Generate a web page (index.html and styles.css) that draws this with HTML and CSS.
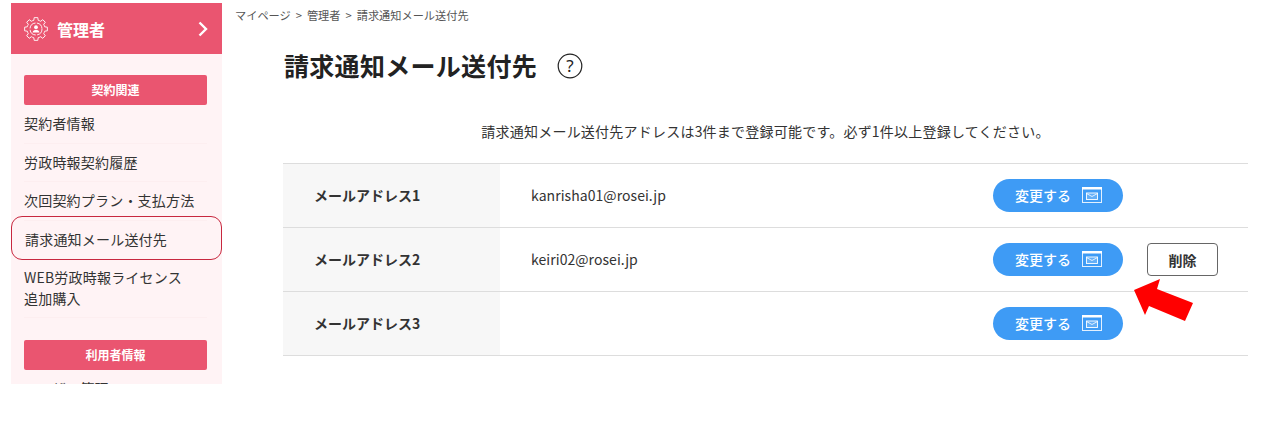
FILE: index.html
```html
<!DOCTYPE html>
<html lang="ja">
<head>
<meta charset="utf-8">
<title>請求通知メール送付先</title>
<link rel="stylesheet" href="styles.css">
</head>
<body>
<div class="page">
  <aside class="sidebar">
    <div class="side-head">
      <svg class="gear" viewBox="0 0 24 24" width="24" height="24" fill="none" stroke="#fff" stroke-width=".9">
        <defs><path id="tooth" d="M20.730 9.820L23.360 10.200V13.800L20.730 14.180A9 9 0 0 1 19.710 16.640"/></defs>
        <use href="#tooth"/>
        <use href="#tooth" transform="rotate(45 12 12)"/>
        <use href="#tooth" transform="rotate(90 12 12)"/>
        <use href="#tooth" transform="rotate(135 12 12)"/>
        <use href="#tooth" transform="rotate(180 12 12)"/>
        <use href="#tooth" transform="rotate(225 12 12)"/>
        <use href="#tooth" transform="rotate(270 12 12)"/>
        <use href="#tooth" transform="rotate(315 12 12)"/>
        <circle cx="12" cy="12" r="6" stroke-dasharray="8 1.500"/>
        <circle cx="12" cy="10.200" r="1.900" fill="#fff" stroke="none"/>
        <path d="M8.600 15.600c.3-2 1.700-2.800 3.400-2.800s3.100.8 3.400 2.800z" fill="#fff" stroke="none"/>
      </svg>
      <span class="side-title">管理者</span>
      <svg class="chev" viewBox="0 0 10 16" width="10" height="16" fill="none" stroke="#fff" stroke-width="2.400"><path d="M1.500 1.500 8 8l-6.500 6.500"/></svg>
    </div>
    <div class="side-body">
      <div class="group-label">契約関連</div>
      <ul class="menu">
        <li class="menu-item">契約者情報</li>
        <li class="menu-item">労政時報契約履歴</li>
        <li class="menu-item">次回契約プラン・支払方法</li>
        <li class="menu-item active">請求通知メール送付先</li>
        <li class="menu-item multi">WEB労政時報ライセンス<br>追加購入</li>
      </ul>
      <div class="group-label second">利用者情報</div>
      <ul class="menu">
        <li class="menu-item">ユーザー管理</li>
      </ul>
    </div>
  </aside>
  <main class="content">
    <nav class="crumbs">マイページ &gt; 管理者 &gt; 請求通知メール送付先</nav>
    <div class="title-row">
      <h1 class="title">請求通知メール送付先</h1>
      <svg class="help" viewBox="0 0 26 26" width="26" height="26"><circle cx="13" cy="13" r="11.800" fill="none" stroke="#222" stroke-width="1.200"/><text x="13" y="19" text-anchor="middle" class="help-mark">?</text></svg>
    </div>
    <p class="lead">請求通知メール送付先アドレスは3件まで登録可能です。必ず1件以上登録してください。</p>
    <div class="table">
      <div class="row">
        <div class="label">メールアドレス1</div>
        <div class="value">kanrisha01@rosei.jp</div>
        <div class="actions">
          <button class="change">変更する<svg class="mail" viewBox="0 0 20 16" width="20" height="16"><use href="#mail-icon"/></svg></button>
        </div>
      </div>
      <div class="row">
        <div class="label">メールアドレス2</div>
        <div class="value">keiri02@rosei.jp</div>
        <div class="actions">
          <button class="change">変更する<svg class="mail" viewBox="0 0 20 16" width="20" height="16"><use href="#mail-icon"/></svg></button>
          <button class="delete">削除</button>
        </div>
      </div>
      <div class="row">
        <div class="label">メールアドレス3</div>
        <div class="value"></div>
        <div class="actions">
          <button class="change">変更する<svg class="mail" viewBox="0 0 20 16" width="20" height="16"><use href="#mail-icon"/></svg></button>
        </div>
      </div>
    </div>
  </main>
</div>
<svg class="arrow" viewBox="0 0 70 50" width="70" height="50"><polygon points="4,11 30,0 27,10 63,24 55,42 19,27 15,36" fill="#ff0000"/></svg>
<svg class="defs" width="0" height="0">
  <defs>
    <g id="mail-icon" fill="none" stroke="#fff">
      <rect x="0.500" y="0.500" width="19" height="15" stroke-width="1" stroke-opacity=".85"/>
      <rect x="0" y="0" width="20" height="2.500" fill="#fff" stroke="none"/>
      <rect x="4.500" y="6" width="11" height="6.500" stroke-width=".9" fill="#fff" fill-opacity=".2"/>
      <path d="M4.500 6.500 10 9.500 15.500 6.500" stroke-width=".8"/>
    </g>
  </defs>
</svg>
</body>
</html>
```
FILE: styles.css
```css
* { box-sizing: border-box; }
html, body { margin: 0; padding: 0; background: #fff; }
body {
  position: relative;
  height: 433px;
  overflow: hidden;
  font-family: "Noto Sans CJK JP", "Noto Sans", sans-serif;
  color: #333;
}
.page { display: flex; align-items: flex-start; padding: 3px 19px 0 11px; }
.sidebar {
  width: 211px;
  height: 381px;
  flex: none;
  overflow: hidden;
  background: #fff3f5;
}
.side-head {
  height: 51px;
  background: #ea5570;
  display: flex;
  align-items: center;
  padding: 0 14px 0 13px;
  color: #fff;
}
.gear { flex: none; overflow: visible; }
.side-title { margin-left: 9px; font-size: 16px; font-weight: 700; flex: 1; }
.side-body { padding: 21px 0 0; }
.group-label {
  width: 183px;
  height: 30px;
  margin: 0 15px 0 13px;
  background: #ea5570;
  border-radius: 2px;
  color: #fff;
  font-size: 12px;
  font-weight: 700;
  line-height: 30px;
  text-align: center;
}
.group-label.second { margin-top: 22px; }
.menu { list-style: none; margin: 0; padding: 0; }
.menu-item {
  height: 38.500px;
  margin: 0 15px 0 13px;
  font-size: 14px;
  letter-spacing: .2px;
  line-height: 36px;
  border-bottom: 1px solid #fdeef0;
  color: #333;
  white-space: nowrap;
}
.menu-item.active {
  height: 44px;
  margin: -4.500px 0 0;
  padding-left: 13px;
  line-height: 44px;
  border: 1px solid #c8283f;
  border-radius: 11px;
}
.menu-item.multi {
  height: 58px;
  line-height: 21px;
  padding-top: 7px;
}
.content { flex: 1; margin-left: 13px; min-width: 0; }
.crumbs { height: 25px; font-size: 11.200px; line-height: 24px; color: #555; word-spacing: 2.500px; }
.title-row { display: flex; align-items: center; margin: 10px 0 0 49px; height: 54px; }
.title { margin: 0; font-size: 25px; letter-spacing: .3px; font-weight: 700; color: #222; line-height: 54px; }
.help { margin: 1px 0 0 20px; }
.help-mark { font-family: "Noto Sans", sans-serif; font-size: 17px; fill: #222; }
.lead {
  margin: 0;
  padding: 30px 0 0 48px;
  height: 71px;
  font-size: 14px;
  letter-spacing: .22px;
  line-height: 18px;
  text-align: center;
  color: #333;
}
.table { margin-left: 48px; border-top: 1px solid #ddd; }
.row { display: flex; height: 64px; border-bottom: 1px solid #ddd; align-items: stretch; }
.label {
  width: 217px;
  flex: none;
  background: #f7f7f7;
  padding-left: 31px;
  font-size: 14px;
  font-weight: 700;
  line-height: 63px;
  color: #333;
}
.value { width: 493px; flex: none; padding-left: 31px; font-size: 14px; letter-spacing: .06px; line-height: 62px; color: #333; }
.actions { display: flex; align-items: center; gap: 24px; }
.change {
  width: 130px;
  height: 33px;
  border: 0;
  border-radius: 17px;
  background: #3e9bf5;
  color: #fff;
  font: 500 14px "Noto Sans CJK JP", sans-serif;
  display: flex;
  align-items: center;
  padding: 0 0 2px 22px;
}
.mail { margin-left: 11px; }
.delete {
  width: 71px;
  height: 33px;
  border: 1px solid #666;
  border-radius: 4px;
  background: #fff;
  color: #333;
  font: 700 14px "Noto Sans CJK JP", sans-serif;
}
.arrow { position: absolute; left: 1130px; top: 279px; }
.defs { position: absolute; }
```
